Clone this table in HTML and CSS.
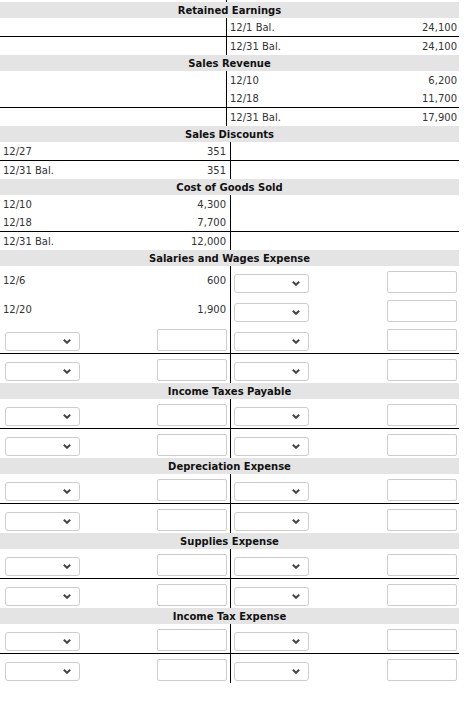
FILE: index.html
```html
<!DOCTYPE html>
<html>
<head>
<meta charset="utf-8">
<link rel="stylesheet" href="styles.css">
</head>
<body>
<div class="ledger">
  <div class="row cr spacer"><div class="l"></div><div class="v"></div><div class="r"></div></div>

  <section class="acct">
    <div class="hdr">Retained Earnings</div>
    <div class="row cr"><div class="l"></div><div class="v"></div><div class="r"><span>12/1 Bal.</span><span>24,100</span></div></div>
    <div class="row cr tot"><div class="l"></div><div class="v"></div><div class="r"><span>12/31 Bal.</span><span>24,100</span></div></div>
  </section>

  <section class="acct">
    <div class="hdr">Sales Revenue</div>
    <div class="row cr"><div class="l"></div><div class="v"></div><div class="r"><span>12/10</span><span>6,200</span></div></div>
    <div class="row cr"><div class="l"></div><div class="v"></div><div class="r"><span>12/18</span><span>11,700</span></div></div>
    <div class="row cr tot"><div class="l"></div><div class="v"></div><div class="r"><span>12/31 Bal.</span><span>17,900</span></div></div>
  </section>

  <section class="acct">
    <div class="hdr">Sales Discounts</div>
    <div class="row"><div class="l"><span>12/27</span><span>351</span></div><div class="v"></div><div class="r"></div></div>
    <div class="row tot"><div class="l"><span>12/31 Bal.</span><span>351</span></div><div class="v"></div><div class="r"></div></div>
  </section>

  <section class="acct">
    <div class="hdr">Cost of Goods Sold</div>
    <div class="row"><div class="l"><span>12/10</span><span>4,300</span></div><div class="v"></div><div class="r"></div></div>
    <div class="row"><div class="l"><span>12/18</span><span>7,700</span></div><div class="v"></div><div class="r"></div></div>
    <div class="row tot"><div class="l"><span>12/31 Bal.</span><span>12,000</span></div><div class="v"></div><div class="r"></div></div>
  </section>

  <section class="acct">
    <div class="hdr">Salaries and Wages Expense</div>
    <div class="row form">
      <div class="l text"><span>12/6</span><span>600</span></div><div class="v"></div>
      <div class="r"><span class="sel"><select><option></option></select><svg viewBox="0 0 8 5" class="chev"><polyline points="0.8,0.8 4,3.8 7.2,0.8"/></svg></span><input type="text"></div>
    </div>
    <div class="row form">
      <div class="l text"><span>12/20</span><span>1,900</span></div><div class="v"></div>
      <div class="r"><span class="sel"><select><option></option></select><svg viewBox="0 0 8 5" class="chev"><polyline points="0.8,0.8 4,3.8 7.2,0.8"/></svg></span><input type="text"></div>
    </div>
    <div class="row form">
      <div class="l"><span class="sel"><select><option></option></select><svg viewBox="0 0 8 5" class="chev"><polyline points="0.8,0.8 4,3.8 7.2,0.8"/></svg></span><input type="text"></div><div class="v"></div>
      <div class="r"><span class="sel"><select><option></option></select><svg viewBox="0 0 8 5" class="chev"><polyline points="0.8,0.8 4,3.8 7.2,0.8"/></svg></span><input type="text"></div>
    </div>
    <div class="row form tot">
      <div class="l"><span class="sel"><select><option></option></select><svg viewBox="0 0 8 5" class="chev"><polyline points="0.8,0.8 4,3.8 7.2,0.8"/></svg></span><input type="text"></div><div class="v"></div>
      <div class="r"><span class="sel"><select><option></option></select><svg viewBox="0 0 8 5" class="chev"><polyline points="0.8,0.8 4,3.8 7.2,0.8"/></svg></span><input type="text"></div>
    </div>
  </section>

  <section class="acct">
    <div class="hdr">Income Taxes Payable</div>
    <div class="row form">
      <div class="l"><span class="sel"><select><option></option></select><svg viewBox="0 0 8 5" class="chev"><polyline points="0.8,0.8 4,3.8 7.2,0.8"/></svg></span><input type="text"></div><div class="v"></div>
      <div class="r"><span class="sel"><select><option></option></select><svg viewBox="0 0 8 5" class="chev"><polyline points="0.8,0.8 4,3.8 7.2,0.8"/></svg></span><input type="text"></div>
    </div>
    <div class="row form tot">
      <div class="l"><span class="sel"><select><option></option></select><svg viewBox="0 0 8 5" class="chev"><polyline points="0.8,0.8 4,3.8 7.2,0.8"/></svg></span><input type="text"></div><div class="v"></div>
      <div class="r"><span class="sel"><select><option></option></select><svg viewBox="0 0 8 5" class="chev"><polyline points="0.8,0.8 4,3.8 7.2,0.8"/></svg></span><input type="text"></div>
    </div>
  </section>

  <section class="acct">
    <div class="hdr">Depreciation Expense</div>
    <div class="row form">
      <div class="l"><span class="sel"><select><option></option></select><svg viewBox="0 0 8 5" class="chev"><polyline points="0.8,0.8 4,3.8 7.2,0.8"/></svg></span><input type="text"></div><div class="v"></div>
      <div class="r"><span class="sel"><select><option></option></select><svg viewBox="0 0 8 5" class="chev"><polyline points="0.8,0.8 4,3.8 7.2,0.8"/></svg></span><input type="text"></div>
    </div>
    <div class="row form tot">
      <div class="l"><span class="sel"><select><option></option></select><svg viewBox="0 0 8 5" class="chev"><polyline points="0.8,0.8 4,3.8 7.2,0.8"/></svg></span><input type="text"></div><div class="v"></div>
      <div class="r"><span class="sel"><select><option></option></select><svg viewBox="0 0 8 5" class="chev"><polyline points="0.8,0.8 4,3.8 7.2,0.8"/></svg></span><input type="text"></div>
    </div>
  </section>

  <section class="acct">
    <div class="hdr">Supplies Expense</div>
    <div class="row form">
      <div class="l"><span class="sel"><select><option></option></select><svg viewBox="0 0 8 5" class="chev"><polyline points="0.8,0.8 4,3.8 7.2,0.8"/></svg></span><input type="text"></div><div class="v"></div>
      <div class="r"><span class="sel"><select><option></option></select><svg viewBox="0 0 8 5" class="chev"><polyline points="0.8,0.8 4,3.8 7.2,0.8"/></svg></span><input type="text"></div>
    </div>
    <div class="row form tot">
      <div class="l"><span class="sel"><select><option></option></select><svg viewBox="0 0 8 5" class="chev"><polyline points="0.8,0.8 4,3.8 7.2,0.8"/></svg></span><input type="text"></div><div class="v"></div>
      <div class="r"><span class="sel"><select><option></option></select><svg viewBox="0 0 8 5" class="chev"><polyline points="0.8,0.8 4,3.8 7.2,0.8"/></svg></span><input type="text"></div>
    </div>
  </section>

  <section class="acct">
    <div class="hdr">Income Tax Expense</div>
    <div class="row form">
      <div class="l"><span class="sel"><select><option></option></select><svg viewBox="0 0 8 5" class="chev"><polyline points="0.8,0.8 4,3.8 7.2,0.8"/></svg></span><input type="text"></div><div class="v"></div>
      <div class="r"><span class="sel"><select><option></option></select><svg viewBox="0 0 8 5" class="chev"><polyline points="0.8,0.8 4,3.8 7.2,0.8"/></svg></span><input type="text"></div>
    </div>
    <div class="row form tot">
      <div class="l"><span class="sel"><select><option></option></select><svg viewBox="0 0 8 5" class="chev"><polyline points="0.8,0.8 4,3.8 7.2,0.8"/></svg></span><input type="text"></div><div class="v"></div>
      <div class="r"><span class="sel"><select><option></option></select><svg viewBox="0 0 8 5" class="chev"><polyline points="0.8,0.8 4,3.8 7.2,0.8"/></svg></span><input type="text"></div>
    </div>
  </section>
</div>
</body>
</html>
```
FILE: styles.css
```css
* { box-sizing: border-box; }
html, body { margin: 0; padding: 0; background: #fff; }
body {
  font-family: "DejaVu Sans", Verdana, sans-serif;
  font-size: 10px;
  color: #333;
}
.ledger { width: 459px; }
.hdr {
  height: 16px;
  line-height: 17px;
  background: #e4e4e4;
  text-align: center;
  font-weight: bold;
  color: #111;
}
.row {
  display: grid;
  grid-template-columns: 230px 1px 228px;
  height: 18px;
}
.row.cr { grid-template-columns: 226px 1px 232px; }
.row.spacer { height: 2px; }
.row.tot { border-top: 1px solid #000; height: 19px; }
.row.form { height: 29px; }
.row.form.tot { height: 30px; }
.v { background: #000; }
.l, .r {
  display: flex;
  justify-content: space-between;
  align-items: center;
  white-space: nowrap;
}
.l { padding: 0 4px 0 3px; }
.r { padding: 0 2px 0 3px; }
.form .l, .form .r { align-items: flex-end; padding-bottom: 2px; }
.form .l { padding-left: 5px; padding-right: 3px; }
.form .r { padding-left: 3px; padding-right: 2px; }
.form .l.text { align-items: center; padding: 0 4px 0 3px; }
.sel {
  position: relative;
  display: block;
  width: 75px;
  height: 19px;
}
.sel select {
  -webkit-appearance: none;
  appearance: none;
  display: block;
  width: 75px;
  height: 19px;
  margin: 0;
  border: 1px solid #cdcdcd;
  border-radius: 3px;
  background: #fff;
  font: inherit;
}
.chev {
  position: absolute;
  right: 9px;
  top: 7px;
  width: 8px;
  height: 5px;
  fill: none;
  stroke: #444;
  stroke-width: 2;
  pointer-events: none;
}
input[type="text"] {
  display: block;
  width: 70px;
  height: 22px;
  margin: 0;
  padding: 0;
  border: 1px solid #cdcdcd;
  border-radius: 2px;
  background: #fff;
  font: inherit;
}
```
